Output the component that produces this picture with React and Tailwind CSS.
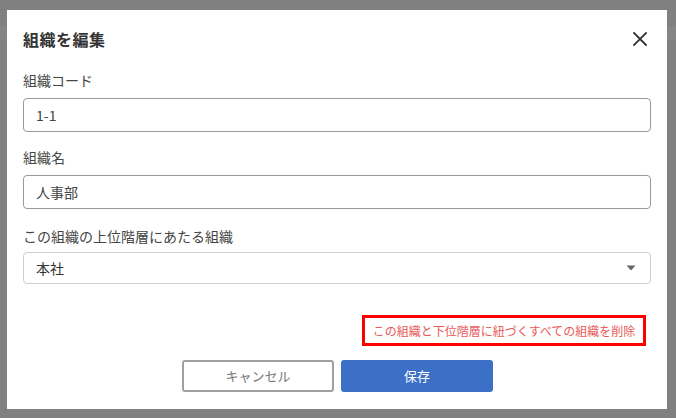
import React from "react";

export default function App() {
  return (
    <div
      className="relative w-[676px] h-[418px] bg-[#808080] overflow-hidden"
      style={{ fontFamily: '"Noto Sans CJK JP", "Noto Sans", sans-serif' }}
    >
      <div className="absolute left-0 right-0 top-[26px] h-[14px] bg-[#858585]" />
      <div className="absolute left-[7px] top-[10px] w-[660px] h-[399px] bg-white flex flex-col px-[16px]">
        <div className="flex items-center justify-between h-[58px]">
          <h2 className="text-[16px] font-bold text-[#333333] tracking-[0.5px]">組織を編集</h2>
          <button className="w-[22px] h-[22px] flex items-center justify-center text-[#333]">
            <svg width="14" height="14" viewBox="0 0 14 14">
              <path d="M1 1 L13 13 M13 1 L1 13" stroke="#333" strokeWidth="1.8" strokeLinecap="square" />
            </svg>
          </button>
        </div>
        <div className="flex flex-col">
          <label className="text-[14px] text-[#444] leading-[20px] mt-[2px]">組織コード</label>
          <div className="mt-[8px] w-[628px] h-[34px] border border-[#9a9a9a] rounded-[4px] flex items-center px-[12px] text-[14px] text-[#444]">
            1-1
          </div>
          <label className="text-[14px] text-[#444] leading-[20px] mt-[15px]">組織名</label>
          <div className="mt-[8px] w-[628px] h-[34px] border border-[#9a9a9a] rounded-[4px] flex items-center px-[12px] text-[14px] text-[#444]">
            人事部
          </div>
          <label className="text-[14px] text-[#444] leading-[20px] mt-[17px]">この組織の上位階層にあたる組織</label>
          <div className="mt-[6px] w-[628px] h-[32px] border border-[#cfcfcf] rounded-[4px] flex items-center justify-between pl-[12px] pr-[14px] text-[14px] text-[#333]">
            <span>本社</span>
            <svg width="10" height="6" viewBox="0 0 10 6">
              <path d="M0.5 0.5 L9.5 0.5 L5 5.5 Z" fill="#666" />
            </svg>
          </div>
        </div>
        <div className="flex justify-end mt-[31px] pr-[5px]">
          <div className="border-[3px] border-[#ff0000] w-[284px] h-[31px] flex items-center justify-center text-[12px] text-[#e85a5a]">
            この組織と下位階層に紐づくすべての組織を削除
          </div>
        </div>
        <div className="flex justify-center gap-[7px] mt-[14px] pl-[1px]">
          <button className="w-[152px] h-[32px] border-2 border-[#a0a0a0] rounded-[3px] bg-white text-[13px] text-[#777]">
            キャンセル
          </button>
          <button className="w-[152px] h-[32px] rounded-[3px] bg-[#3c70c6] text-[13px] text-white">
            保存
          </button>
        </div>
      </div>
    </div>
  );
}
